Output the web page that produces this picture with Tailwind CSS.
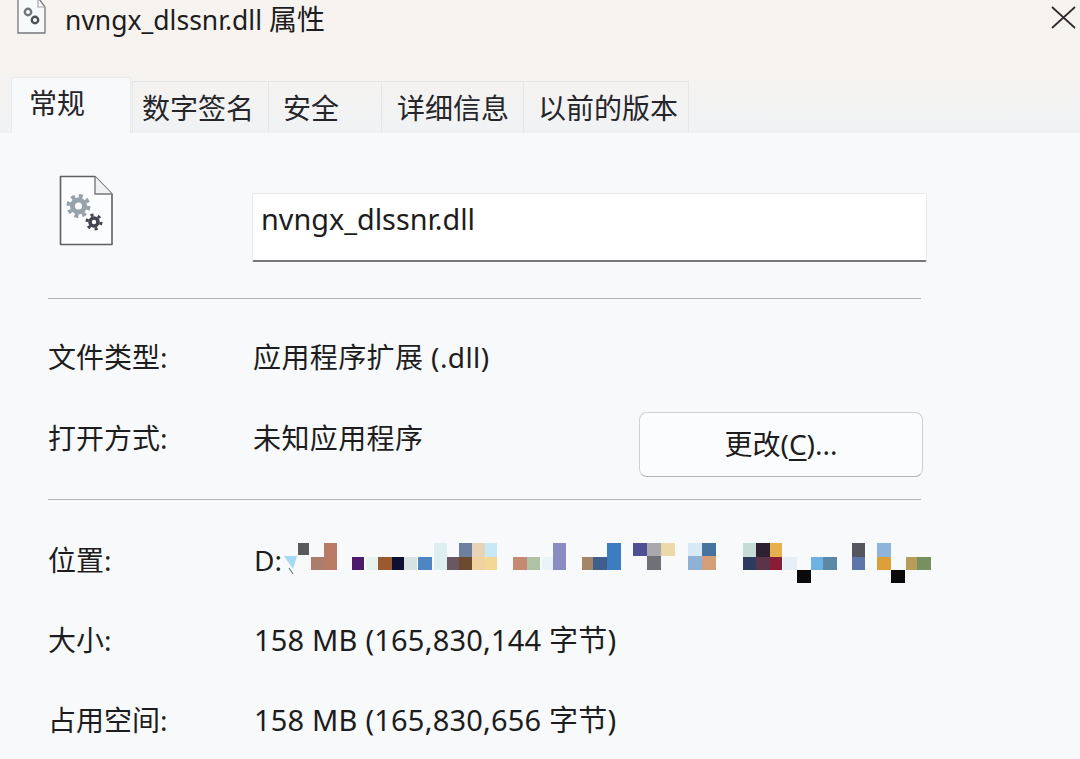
<!DOCTYPE html>
<html>
  <head>
    <meta charset="UTF-8" />
    <meta name="viewport" content="width=device-width, initial-scale=1.0" />
    <script src="https://cdn.jsdelivr.net/npm/@tailwindcss/browser@4"></script>
  </head>
  <body class="w-[1080px] h-[759px] overflow-hidden bg-[#f8f9fb] text-[#1d1d20] font-['Noto_Sans','Noto_Sans_CJK_SC',sans-serif]">
    <!-- title bar + tabs -->
    <div class="h-[133px] flex flex-col bg-gradient-to-b from-[#f7f3ef] via-[#f6f3f0] to-[#f0f2f4]">
      <div class="h-[77px] flex items-start pl-[17px] pr-[4px]">
        <svg class="w-[29px] h-[35px] mt-[-1px] shrink-0" viewBox="0 0 29 35" fill="none">
          <path d="M1 0V34H28V8L22 0" fill="#f8f9fb" stroke="#77777c" stroke-width="1.3" />
          <path d="M21 0V8H28" stroke="#a5a5aa" stroke-width="1.2" />
          <circle cx="11" cy="13" r="3.2" stroke="#70757c" stroke-width="2.4" />
          <circle cx="18" cy="21" r="3.2" stroke="#4c4e55" stroke-width="2.4" />
        </svg>
        <div class="ml-[19px] mt-[-1px] text-[26.5px] leading-[40px]">nvngx_dlssnr.dll <span class="text-[28px]">属性</span></div>
        <svg class="ml-auto mt-[6px] w-[25px] h-[23px]" viewBox="0 0 25 23" fill="none">
          <path d="M1 1L24 22M24 1L1 22" stroke="#2a2a2d" stroke-width="1.7" />
        </svg>
      </div>
      <div class="h-[56px] flex items-end pl-[11px] text-[28px] text-[#25252a]">
        <div class="w-[120px] h-[56px] pl-[17px] pt-[4px] leading-[42px] bg-[#f8f9fb] border border-b-0 border-[#e9eaec] rounded-t-[3px]">常规</div>
        <div class="w-[137px] h-[52px] ml-[1px] pl-[9px] pt-[6px] leading-[40px] border border-b-0 border-[#e5e6e8]">数字签名</div>
        <div class="w-[113px] h-[52px] pl-[14px] pt-[6px] leading-[40px] border-r border-t border-[#e5e6e8]">安全</div>
        <div class="w-[142px] h-[52px] pl-[15px] pt-[6px] leading-[40px] border-r border-t border-[#e5e6e8]">详细信息</div>
        <div class="w-[165px] h-[52px] pl-[14px] pt-[6px] leading-[40px] border-r border-t border-[#e5e6e8]">以前的版本</div>
      </div>
    </div>

    <!-- general page -->
    <div class="pl-[48px]">
      <div class="h-[166px] flex items-start border-b border-[#b4b4b6] w-[873px]">
        <svg class="ml-[11px] mt-[42px] w-[55px] h-[71px] shrink-0" viewBox="0 0 55 71" fill="none">
          <path d="M1.5 1.5H36L53 19V69.5H1.5Z" fill="#fbfcfd" stroke="#5f5f65" stroke-width="1.6" stroke-linejoin="round" />
          <path d="M36 1.5V19H53" fill="#f0f1f3" stroke="#77777d" stroke-width="1.4" stroke-linejoin="round" />
          <circle cx="19.500" cy="31" r="6" stroke="#98a2ab" stroke-width="5" />
          <circle cx="19.500" cy="31" r="10" stroke="#98a2ab" stroke-width="4" stroke-dasharray="4 3.85" />
          <circle cx="35" cy="47" r="4" stroke="#43444f" stroke-width="3.6" />
          <circle cx="35" cy="47" r="7" stroke="#43444f" stroke-width="3" stroke-dasharray="3 4.33" />
        </svg>
        <div class="ml-[138px] mt-[60px] w-[675px] h-[69px] shrink-0 pl-[8px] text-[28.8px] leading-[50px] bg-white border border-[#e8e9eb] border-b-[2px] border-b-[#77777a] rounded-[2px]">nvngx_dlssnr.dll</div>
      </div>

      <div class="h-[201px] pt-[38px] border-b border-[#b4b4b6] w-[873px]">
        <div class="flex items-center h-[40px] text-[28px]">
          <div class="w-[205px] shrink-0">文件类型:</div>
          <div class="tracking-[0.4px]">应用程序扩展 (.dll)</div>
        </div>
        <div class="flex items-center h-[65px] mt-[35px] text-[28px]">
          <div class="w-[205px] shrink-0 pb-[14px]">打开方式:</div>
          <div class="w-[386px] shrink-0 pb-[14px] tracking-[0.4px]">未知应用程序</div>
          <div class="w-[284px] h-[65px] shrink-0 pb-[2px] flex items-center justify-center bg-[#fbfcfd] border border-[#cfd0d3] border-b-[#b2b3b6] rounded-[8px]">更改(<span class="underline underline-offset-4">C</span>)...</div>
        </div>
      </div>

      <div class="flex items-center h-[46px] mt-[37px] text-[28px] relative">
        <div class="w-[206px] shrink-0">位置:</div>
        <div>D:</div>
        <svg class="absolute left-[232px] top-[4px] w-[655px] h-[45px] blur-[0.4px]" viewBox="280 540 655 45">
          <path d="M284 555H297L293 568Z" fill="#a5d8f2" />
          <path d="M289 567L293 573" stroke="#5d7a8a" stroke-width="1.2" />
          <g shape-rendering="crispEdges">
            <rect x="298" y="542" width="11" height="12" fill="#5a5a5c" />
            <rect x="311" y="556" width="13" height="13" fill="#ab7d6c" />
            <rect x="324" y="542" width="13" height="27" fill="#b97b65" />
            <rect x="352" y="556" width="12" height="13" fill="#4b1a6b" />
            <rect x="366" y="556" width="12" height="13" fill="#e6f3ef" />
            <rect x="378" y="556" width="14" height="13" fill="#9a5a30" />
            <rect x="392" y="556" width="12" height="13" fill="#0d1030" />
            <rect x="404" y="556" width="13" height="13" fill="#d7e3e0" />
            <rect x="418" y="556" width="14" height="13" fill="#4d86c3" />
            <rect x="434" y="542" width="13" height="27" fill="#deeff2" />
            <rect x="447" y="556" width="12" height="13" fill="#6a5763" />
            <rect x="459" y="542" width="13" height="14" fill="#6d7f9f" />
            <rect x="459" y="556" width="13" height="13" fill="#6d4a2e" />
            <rect x="472" y="542" width="13" height="14" fill="#e9d3b8" />
            <rect x="472" y="556" width="13" height="13" fill="#efd2a0" />
            <rect x="485" y="542" width="12" height="14" fill="#c7e9f5" />
            <rect x="485" y="556" width="12" height="13" fill="#f5d795" />
            <rect x="513" y="556" width="14" height="13" fill="#c68a72" />
            <rect x="527" y="556" width="13" height="13" fill="#b0c2a6" />
            <rect x="542" y="556" width="11" height="13" fill="#eaf3f7" />
            <rect x="553" y="542" width="13" height="27" fill="#8a8cc4" />
            <rect x="582" y="556" width="11" height="13" fill="#a58567" />
            <rect x="593" y="556" width="14" height="13" fill="#3e5f8c" />
            <rect x="607" y="542" width="14" height="27" fill="#3d7cc0" />
            <rect x="633" y="542" width="14" height="13" fill="#4f4f95" />
            <rect x="647" y="542" width="14" height="13" fill="#a8a8ad" />
            <rect x="647" y="555" width="14" height="14" fill="#707078" />
            <rect x="661" y="542" width="14" height="13" fill="#ecd8a8" />
            <rect x="688" y="542" width="14" height="13" fill="#d9e8f5" />
            <rect x="688" y="555" width="14" height="14" fill="#8fb1d8" />
            <rect x="702" y="542" width="14" height="13" fill="#44749f" />
            <rect x="702" y="555" width="14" height="14" fill="#d39f78" />
            <rect x="743" y="542" width="13" height="14" fill="#c5dcd6" />
            <rect x="756" y="542" width="14" height="14" fill="#2e2030" />
            <rect x="770" y="542" width="12" height="14" fill="#e7b04f" />
            <rect x="743" y="556" width="13" height="13" fill="#2b3a5e" />
            <rect x="756" y="556" width="14" height="13" fill="#5a3448" />
            <rect x="770" y="556" width="12" height="13" fill="#8a1c38" />
            <rect x="783" y="556" width="14" height="13" fill="#e6eef6" />
            <rect x="797" y="569" width="14" height="13" fill="#0a0a0a" />
            <rect x="811" y="556" width="12" height="13" fill="#6cb2e4" />
            <rect x="823" y="556" width="14" height="13" fill="#5c88a8" />
            <rect x="852" y="542" width="13" height="14" fill="#55555f" />
            <rect x="852" y="556" width="13" height="13" fill="#5c74a8" />
            <rect x="877" y="542" width="14" height="14" fill="#8fb4dc" />
            <rect x="877" y="556" width="14" height="13" fill="#dd9f3a" />
            <rect x="891" y="569" width="14" height="13" fill="#0a0a0a" />
            <rect x="906" y="556" width="11" height="13" fill="#b89c5a" />
            <rect x="917" y="556" width="14" height="13" fill="#76915f" />
          </g>
        </svg>
      </div>
      <div class="flex items-center h-[40px] mt-[37px] text-[29px]">
        <div class="w-[206px] shrink-0 text-[28px]">大小:</div>
        <div class="tracking-[0.2px]">158 MB (165,830,144 字节)</div>
      </div>
      <div class="flex items-center h-[40px] mt-[40px] text-[29px]">
        <div class="w-[206px] shrink-0 text-[28px]">占用空间:</div>
        <div class="tracking-[0.2px]">158 MB (165,830,656 字节)</div>
      </div>
    </div>
  </body>
</html>
